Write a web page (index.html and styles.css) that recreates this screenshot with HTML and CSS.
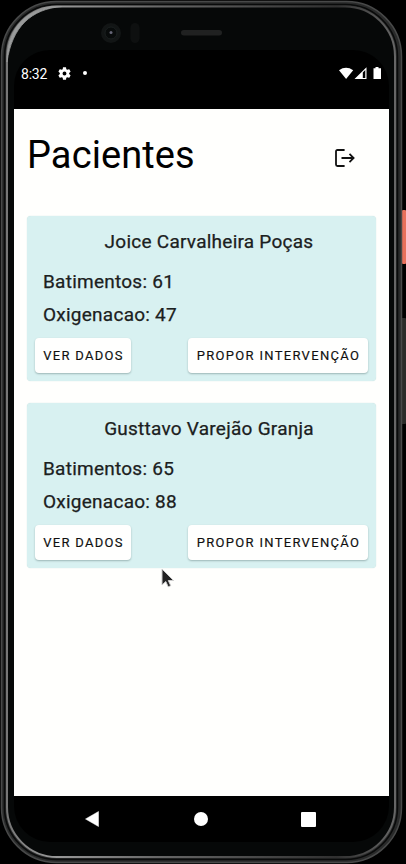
FILE: index.html
```html
<!DOCTYPE html>
<html lang="pt">
<head>
<meta charset="utf-8">
<title>Pacientes</title>
<link rel="stylesheet" href="styles.css">
</head>
<body>
<div class="phone">
  <svg class="shell" width="406" height="864" viewBox="0 0 406 864" fill="none" aria-hidden="true">
    <defs>
      <linearGradient id="shine" x1="0" y1="0" x2="1" y2="0">
        <stop offset="0" stop-color="#777"/><stop offset=".12" stop-color="#999"/><stop offset=".4" stop-color="#666"/><stop offset=".85" stop-color="#303030"/><stop offset="1" stop-color="#666"/>
      </linearGradient>
    </defs>
    <rect x="402" y="210" width="4" height="54" rx="1" fill="#e8705b"/>
    <rect x="401" y="318" width="5" height="106" rx="1" fill="#2b2b29"/>
    <rect x="1.5" y="1.5" width="400" height="861" rx="55" fill="#292a2a" stroke="#484949" stroke-width="1.5"/>
    <rect x="4.500" y="4.5" width="393" height="855" rx="52" stroke="#090a0a" stroke-width="1.5"/>
    <rect x="7" y="6.5" width="388" height="850.5" rx="50" fill="#060808" stroke="url(#shine)" stroke-width="2"/>
    <path d="M7 62C7 27 27 7 62 6.500C31 9 12 27 7 62" fill="#999b9b" stroke="#999b9b" stroke-width=".8"/>
    <rect x="14" y="50" width="375" height="792" rx="36" fill="#000"/>
    <circle cx="111" cy="33" r="10" fill="#121515"/>
    <circle cx="111" cy="33" r="6" fill="#080b0b" stroke="#1a1f1f"/>
    <circle cx="111" cy="32.500" r="1.500" fill="#667"/>
    <rect x="130.500" y="23" width="9" height="20" rx="4.500" fill="#0e1010"/>
    <rect x="181" y="30" width="41" height="5.500" rx="2.750" fill="#202121"/>
  </svg>
  <div class="screen">
    <header class="status">
      <span class="clock">8:32</span>
      <svg class="gear" width="13" height="13" viewBox="2 2 20 20"><path fill="#fff" d="M19.140 12.940c.04-.3.060-.61.060-.94s-.02-.64-.07-.94l2.030-1.580a.49.49 0 0 0 .12-.61l-1.920-3.320a.488.488 0 0 0-.59-.22l-2.390.96c-.5-.38-1.030-.7-1.620-.94l-.36-2.540a.484.484 0 0 0-.48-.41h-3.840c-.24 0-.43.17-.47.41l-.36 2.540c-.59.24-1.130.57-1.620.94l-2.390-.96c-.22-.08-.47 0-.59.22L2.740 8.870c-.12.21-.08.47.12.61l2.030 1.580c-.05.3-.09.63-.09.94s.02.64.07.94l-2.030 1.580a.49.49 0 0 0-.12.61l1.920 3.320c.12.22.37.29.59.22l2.390-.96c.5.38 1.030.7 1.620.94l.36 2.540c.05.24.24.41.48.41h3.840c.24 0 .44-.17.47-.41l.36-2.540c.59-.24 1.130-.56 1.620-.94l2.390.96c.22.08.47 0 .59-.22l1.920-3.320c.12-.22.07-.47-.12-.61zM12 15a3 3 0 1 1 0-6 3 3 0 0 1 0 6z"/></svg>
      <span class="dot"></span>
      <svg class="signals" width="43" height="14" viewBox="0 0 43 14" fill="#fff"><path d="M0 3.200Q7 -1.500 14.200 3.200L7.100 12z"/><path fill-rule="evenodd" d="M15.500 12L27.500 .3V12zM23.800 5.500V11h2.500V3z"/><path d="M36.500 0h3v1.300h2.500V12H34.500V1.300h2z"/></svg>
    </header>
    <main class="app">
      <div class="heading">
        <h1>Pacientes</h1>
        <svg class="logout" width="20" height="19" viewBox="0 0 20 19" fill="none" stroke="#111" stroke-width="1.800"><path d="M9.600 1H2.500Q1 1 1 2.500v13Q1 17 2.500 17H9.600"/><path d="M6.500 9H18.500M14.500 4.900L18.600 9l-4.100 4.100"/></svg>
      </div>
      <article class="card">
        <h2>Joice Carvalheira Poças</h2>
        <p>Batimentos: 61</p>
        <p>Oxigenacao: 47</p>
        <div class="actions"><button class="view">VER DADOS</button><button class="propose">PROPOR INTERVENÇÃO</button></div>
      </article>
      <article class="card">
        <h2>Gusttavo Varejão Granja</h2>
        <p>Batimentos: 65</p>
        <p>Oxigenacao: 88</p>
        <div class="actions"><button class="view">VER DADOS</button><button class="propose">PROPOR INTERVENÇÃO</button></div>
      </article>
    </main>
    <nav class="navbar">
      <svg width="14" height="16" viewBox="0 0 14 16"><path d="M.5 8L13.500 .5v15z" fill="#fff" stroke="#fff" stroke-width=".5"/></svg>
      <svg class="home" width="14" height="14" viewBox="0 0 14 14"><circle cx="7" cy="7" r="7" fill="#fff"/></svg>
      <span class="square"></span>
    </nav>
  </div>
  <svg class="cursor" width="14" height="22" viewBox="0 0 14 22"><path d="M1 1v16l3.800-3.500 2.400 5.300 2.500-1.100-2.400-5.200h5.200z" fill="#222" stroke="#ccc" stroke-width="1"/></svg>
</div>
</body>
</html>
```
FILE: styles.css
```css
* { box-sizing: border-box; }
body { margin: 0; background: #000; font-family: Roboto, "Liberation Sans", sans-serif; }
.phone { position: relative; width: 406px; height: 864px; padding: 50px 17px 22px 14px; overflow: hidden; }
.shell { position: absolute; inset: 0; }
.screen { position: relative; display: flex; flex-direction: column; height: 792px; }
.status { display: flex; align-items: flex-start; height: 59px; padding: 17px 7px 0 7px; color: #fff; }
.clock { font-size: 14px; line-height: 14px; width: 36px; letter-spacing: -.2px; white-space: nowrap; }
.gear { margin-left: 1px; }
.dot { width: 4px; height: 4px; border-radius: 50%; background: #fff; margin: 4px 0 0 12px; }
.signals { margin-left: auto; }
.app { flex: 1; background: #fffffd; padding: 0 13px; }
.heading { display: flex; justify-content: space-between; height: 107px; padding: 23px 21px 0 0; }
h1 { margin: 0; font-size: 38px; line-height: 46px; font-weight: 400; letter-spacing: .1px; color: #000; white-space: nowrap; }
.logout { margin-top: 17px; }
.card { height: 165px; margin-bottom: 22px; padding: 13px 8px 0; background: #d8f1f1; border-radius: 4px; color: #1b2020; box-shadow: 0 0 1px #b8d5d3; }
h2, .card p { font-size: 19px; line-height: 26px; font-weight: 400; letter-spacing: .25px; -webkit-text-stroke: .25px #1b2020; white-space: nowrap; }
h2 { margin: 0 0 14px; padding-left: 15px; text-align: center; }
.card p { margin: 0 0 7px 8px; }
.actions { display: flex; justify-content: space-between; margin-top: 10px; }
button { height: 35px; border: 0; padding: 0; border-radius: 4px; background: #fffffe; color: #101010; font: 400 13px Roboto, sans-serif; letter-spacing: 1.3px; -webkit-text-stroke: .15px #101010; white-space: nowrap; box-shadow: 0 1px 2px #9bb5b5; }
.view { width: 96px; padding-left: 1px; }
.propose { width: 180px; padding-left: 1px; }
.navbar { display: flex; justify-content: space-between; align-items: center; height: 46px; padding: 0 73px 0 71px; }
.home { margin-left: 2px; }
.square { width: 15px; height: 15px; border-radius: 1px; background: #fff; }
.cursor { position: absolute; left: 161px; top: 568px; }
```
